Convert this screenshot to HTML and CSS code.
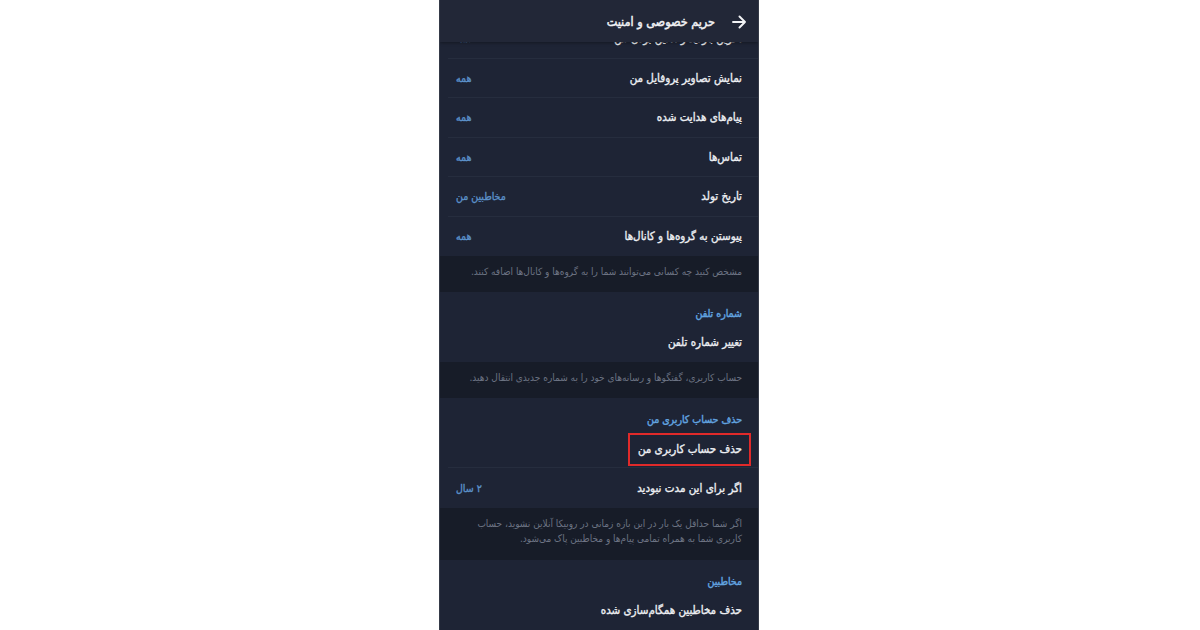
FILE: index.html
```html
<!DOCTYPE html>
<html lang="fa">
<head>
<meta charset="utf-8">
<title>حریم خصوصی و امنیت</title>
<link rel="stylesheet" href="styles.css">
</head>
<body>
<div class="phone" dir="rtl">
  <header class="topbar">
    <svg class="back" width="14" height="14" viewBox="0 0 14 14" aria-hidden="true">
      <path d="M1 7H13M7.5 1.5L13 7L7.5 12.5" fill="none" stroke="#f2f3f5" stroke-width="1.9" stroke-linecap="round" stroke-linejoin="round"/>
    </svg>
    <span class="title">حریم خصوصی و امنیت</span>
  </header>
  <main class="scroll">
    <section class="group">
      <div class="row cut"><span class="label">آخرین بازدید و آنلاین بودن من</span><span class="value">همه</span></div>
      <div class="row"><span class="label">نمایش تصاویر پروفایل من</span><span class="value">همه</span></div>
      <div class="row"><span class="label">پیام‌های هدایت شده</span><span class="value">همه</span></div>
      <div class="row"><span class="label">تماس‌ها</span><span class="value">همه</span></div>
      <div class="row"><span class="label">تاریخ تولد</span><span class="value">مخاطبین من</span></div>
      <div class="row last"><span class="label">پیوستن به گروه‌ها و کانال‌ها</span><span class="value">همه</span></div>
    </section>
    <p class="info">مشخص کنید چه کسانی می‌توانند شما را به گروه‌ها و کانال‌ها اضافه کنند.</p>
    <section class="group">
      <h2 class="group-title">شماره تلفن</h2>
      <div class="row first last"><span class="label">تغییر شماره تلفن</span></div>
    </section>
    <p class="info">حساب کاربری، گفتگوها و رسانه‌های خود را به شماره جدیدی انتقال دهید.</p>
    <section class="group">
      <h2 class="group-title">حذف حساب کاربری من</h2>
      <div class="row first highlighted"><span class="label marked">حذف حساب کاربری من</span></div>
      <div class="row last"><span class="label">اگر برای این مدت نبودید</span><span class="value">۲ سال</span></div>
    </section>
    <p class="info two">اگر شما حداقل یک بار در این بازه زمانی در روبیکا آنلاین نشوید، حساب<br>کاربری شما به همراه تمامی پیام‌ها و مخاطبین پاک می‌شود.</p>
    <section class="group">
      <h2 class="group-title">مخاطبین</h2>
      <div class="row first last"><span class="label">حذف مخاطبین همگام‌سازی شده</span></div>
    </section>
  </main>
</div>
</body>
</html>
```

FILE: styles.css
```css
html, body {
  margin: 0;
  padding: 0;
  background: #ffffff;
}

body {
  display: flex;
  justify-content: center;
  font-family: "DejaVu Sans Condensed", "DejaVu Sans", sans-serif;
  font-stretch: condensed;
}

.phone {
  width: 320px;
  height: 630px;
  margin-right: 2px;
  background: #1e2435;
  display: flex;
  flex-direction: column;
  overflow: hidden;
  border-left: 1px solid #353a47;
  border-right: 1px solid #353a47;
  box-sizing: border-box;
}

.topbar {
  position: relative;
  z-index: 1;
  height: 42px;
  flex: none;
  display: flex;
  align-items: center;
  gap: 17px;
  padding-right: 12px;
  background: #222737;
  box-shadow: 0 1px 3px rgba(0, 0, 0, 0.35);
}

.back {
  flex: none;
  margin-top: 1px;
}

.title {
  color: #f1f2f5;
  font-size: 12.5px;
  font-weight: normal;
  -webkit-text-stroke: 0.45px #f1f2f5;
}

.scroll {
  flex: 1;
  overflow: hidden;
}

.group {
  background: #1e2435;
}

.group-title {
  margin: 0;
  height: 30px;
  box-sizing: border-box;
  padding: 14px 16px 0;
  font-size: 10.5px;
  line-height: 14px;
  font-weight: normal;
  color: #62a4e0;
  -webkit-text-stroke: 0.4px #62a4e0;
}

.row {
  display: flex;
  align-items: center;
  justify-content: space-between;
  height: 39.5px;
  box-sizing: border-box;
  padding: 0 16px 0 8px;
  border-bottom: 1px solid #262d3e;
  margin-left: 8px;
}

.row.first {
  height: 40px;
}

.row.highlighted {
  padding-top: 4px;
}

.row.last {
  border-bottom: none;
  margin-left: 0;
  padding-left: 16px;
}

.row.cut {
  margin-top: -23px;
}

.label {
  color: #eceef2;
  font-size: 11.5px;
  font-weight: normal;
  -webkit-text-stroke: 0.35px #eceef2;
}

.value {
  color: #5b90c8;
  font-size: 10.5px;
  font-weight: normal;
  -webkit-text-stroke: 0.35px #5b90c8;
}

.marked {
  border: 2px solid #e02a2a;
  padding: 7px 7px 8px 8px;
  margin-right: -9px;
}

.info {
  margin: 0;
  background: #171c28;
  padding: 8px 16px 13px;
  font-size: 10px;
  line-height: 15px;
  color: #6c7383;
}

.info.two {
  padding: 8px 16px 14px;
}
```
